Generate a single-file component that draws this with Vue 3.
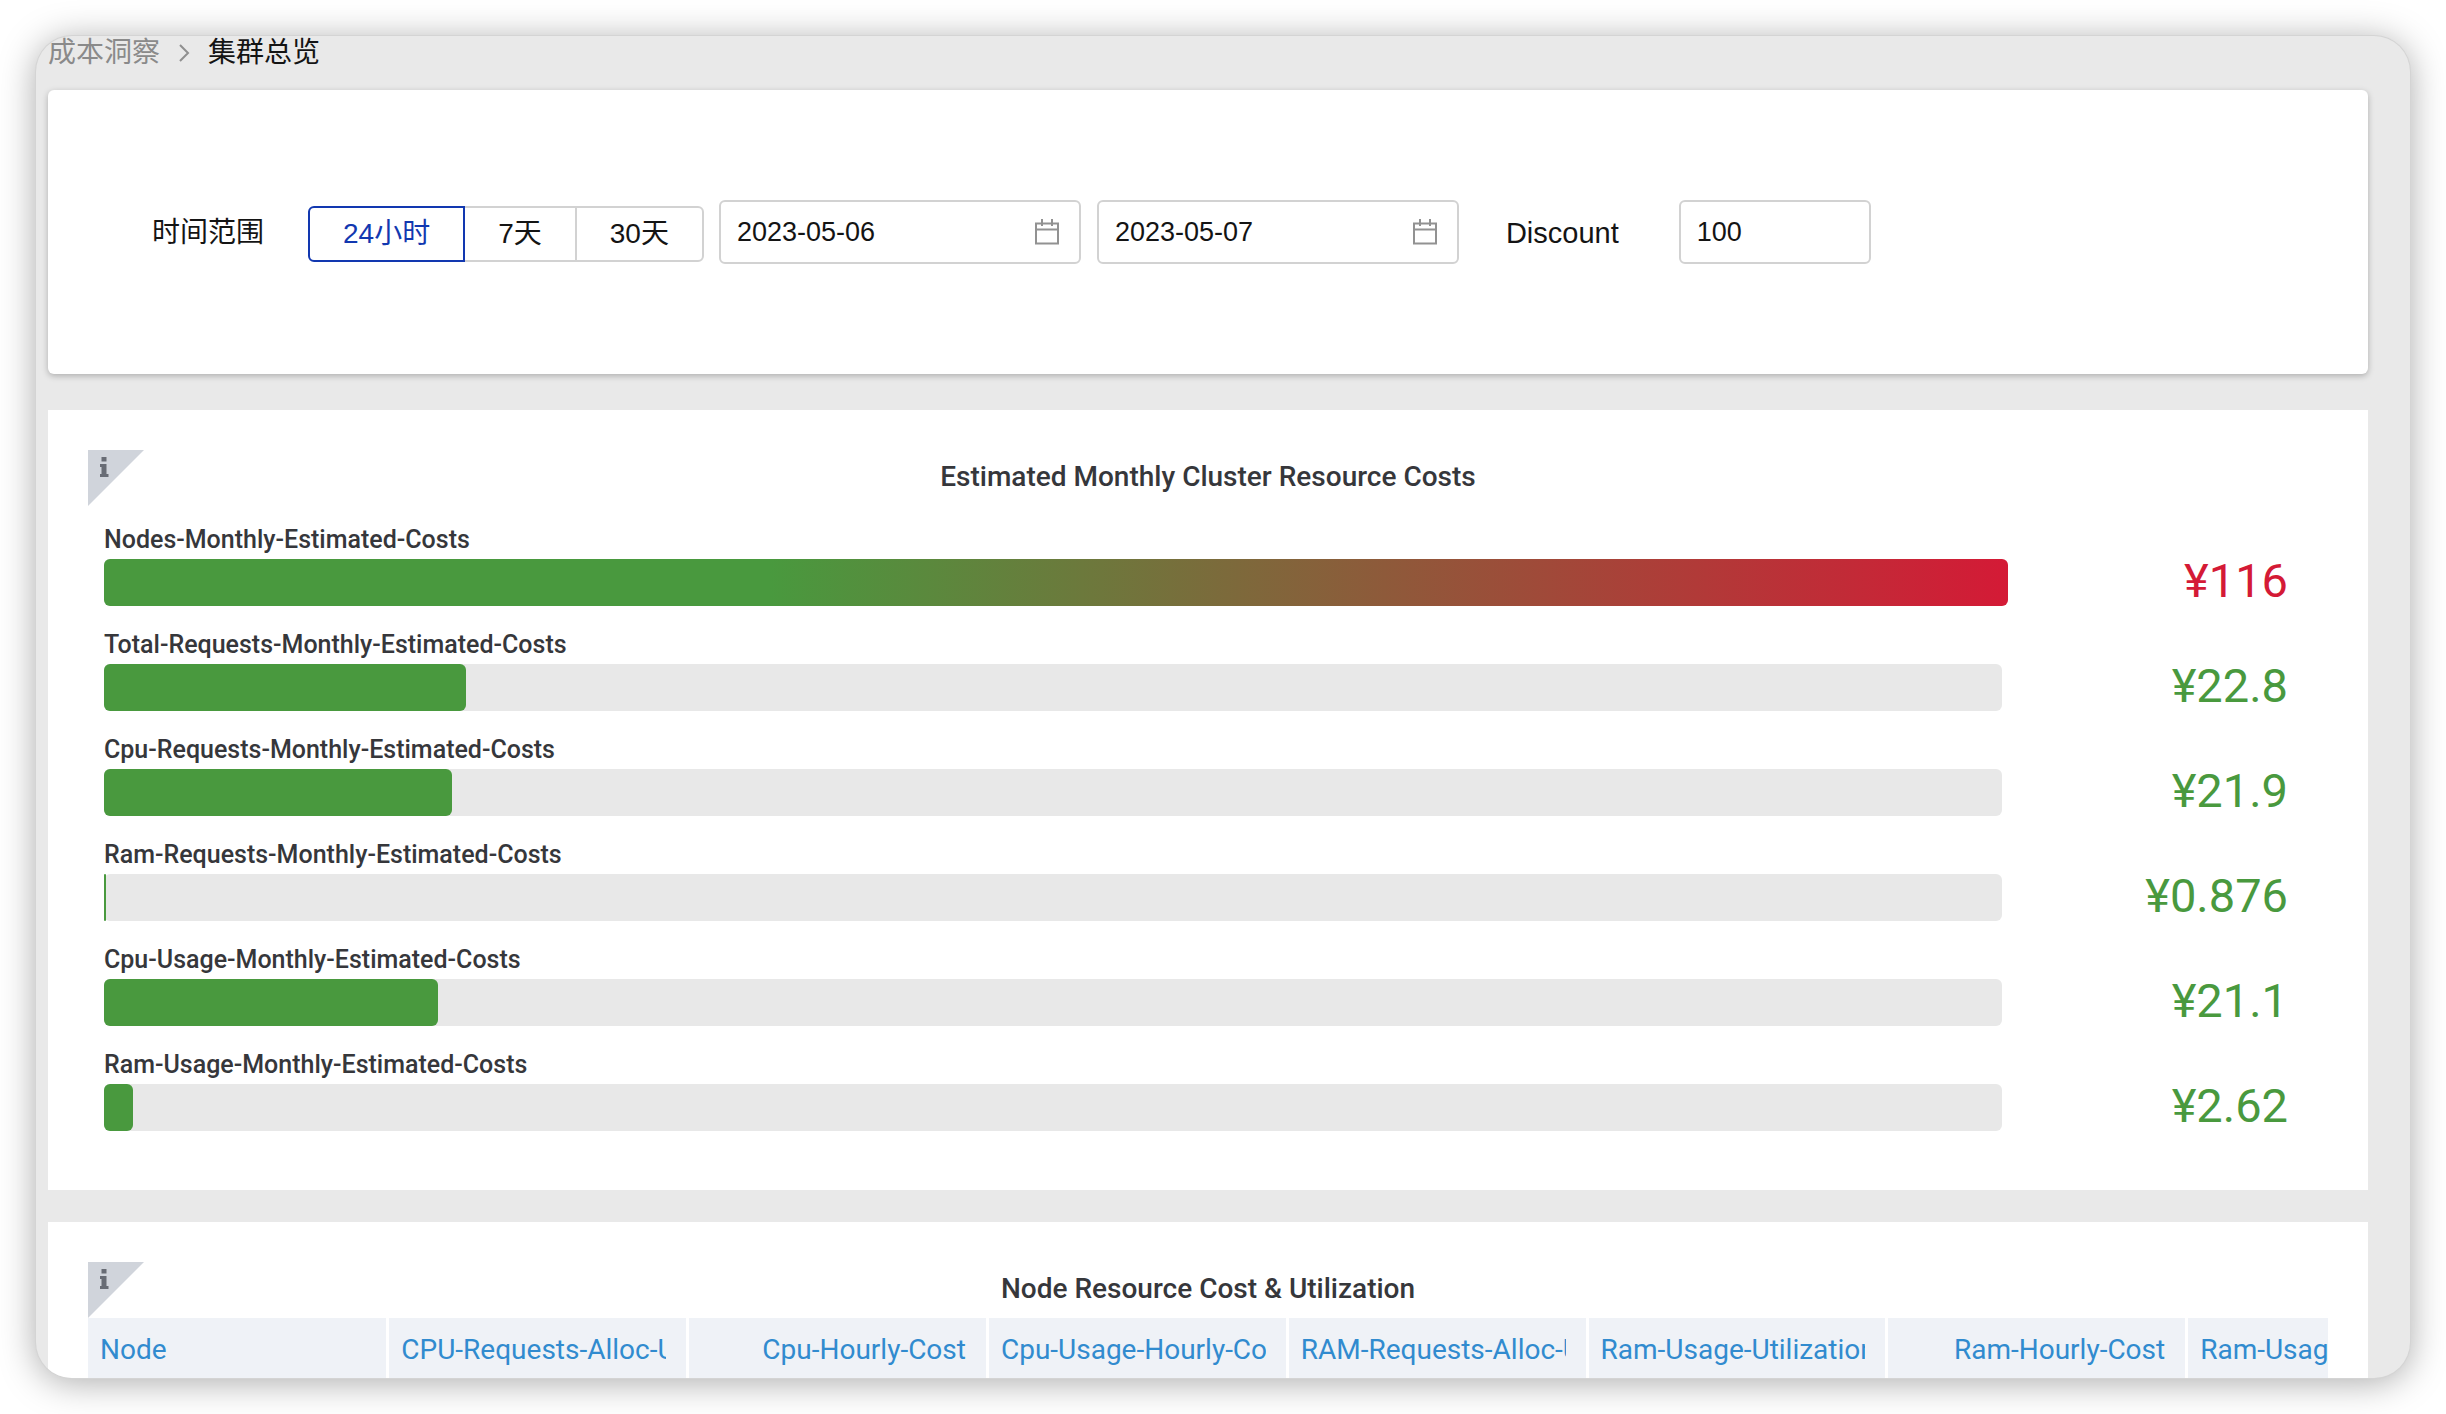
<script setup>
import { ref } from 'vue'

const ranges = ['24小时', '7天', '30天']
const activeRange = ref('24小时')
const startDate = ref('2023-05-06')
const endDate = ref('2023-05-07')
const discount = ref('100')

const costs = [
  { label: 'Nodes-Monthly-Estimated-Costs', value: '¥116', percent: 100.3, high: true },
  { label: 'Total-Requests-Monthly-Estimated-Costs', value: '¥22.8', percent: 19.05 },
  { label: 'Cpu-Requests-Monthly-Estimated-Costs', value: '¥21.9', percent: 18.32 },
  { label: 'Ram-Requests-Monthly-Estimated-Costs', value: '¥0.876', percent: 0.1 },
  { label: 'Cpu-Usage-Monthly-Estimated-Costs', value: '¥21.1', percent: 17.58 },
  { label: 'Ram-Usage-Monthly-Estimated-Costs', value: '¥2.62', percent: 1.53 },
]

const columns = [
  { name: 'Node' },
  { name: 'CPU-Requests-Alloc-Utilization' },
  { name: 'Cpu-Hourly-Cost', right: true },
  { name: 'Cpu-Usage-Hourly-Cost' },
  { name: 'RAM-Requests-Alloc-Utilization' },
  { name: 'Ram-Usage-Utilization' },
  { name: 'Ram-Hourly-Cost', right: true },
  { name: 'Ram-Usage-Hourly-Cost' },
]
</script>

<template>
  <div class="window">
    <nav class="breadcrumb" aria-label="breadcrumb">
      <a href="#" class="crumb">成本洞察</a>
      <svg class="chevron" viewBox="0 0 12 18" aria-hidden="true">
        <path d="M2 1l8 8-8 8" fill="none" stroke="#8f8f8f" stroke-width="2" />
      </svg>
      <span class="crumb current">集群总览</span>
    </nav>

    <form class="filters" @submit.prevent>
      <span id="range-label" class="label">时间范围</span>
      <div class="range" role="group" aria-labelledby="range-label">
        <button
          v-for="r in ranges"
          :key="r"
          type="button"
          :class="{ active: r === activeRange }"
          @click="activeRange = r"
        >{{ r }}</button>
      </div>
      <label class="field date">
        <input v-model="startDate" type="text" aria-label="开始日期" />
        <svg viewBox="0 0 24 26" aria-hidden="true">
          <path d="M1 4.5h22v20H1zM1 10.5h22M7 0v7M17 0v7" />
        </svg>
      </label>
      <label class="field date">
        <input v-model="endDate" type="text" aria-label="结束日期" />
        <svg viewBox="0 0 24 26" aria-hidden="true">
          <path d="M1 4.5h22v20H1zM1 10.5h22M7 0v7M17 0v7" />
        </svg>
      </label>
      <label class="label discount-label" for="discount">Discount</label>
      <div class="field discount">
        <input id="discount" v-model="discount" type="text" />
      </div>
    </form>

    <section class="panel costs">
      <svg class="corner" viewBox="0 0 56 56" aria-hidden="true">
        <path d="M0 0h56L0 56z" fill="#d0d4db" />
        <path d="M13.5 7h5v4.5h-5zM12 14h6.500v10H20.500v3H12v-3h1.500v-7H12z" fill="#686c75" />
      </svg>
      <h2>Estimated Monthly Cluster Resource Costs</h2>
      <ul class="gauges">
        <li v-for="c in costs" :key="c.label">
          <span class="name">{{ c.label }}</span>
          <div class="row">
            <div class="track">
              <div class="fill" :class="{ high: c.high }" :style="{ width: c.percent + '%' }"></div>
            </div>
            <span class="value" :class="{ high: c.high }">{{ c.value }}</span>
          </div>
        </li>
      </ul>
    </section>

    <section class="panel nodes">
      <svg class="corner" viewBox="0 0 56 56" aria-hidden="true">
        <path d="M0 0h56L0 56z" fill="#d0d4db" />
        <path d="M13.5 7h5v4.5h-5zM12 14h6.500v10H20.500v3H12v-3h1.500v-7H12z" fill="#686c75" />
      </svg>
      <h2>Node Resource Cost &amp; Utilization</h2>
      <div class="table-wrap">
        <table>
          <thead>
            <tr>
              <th v-for="c in columns" :key="c.name" scope="col" :class="{ right: c.right }">
                <div>{{ c.name }}</div>
              </th>
            </tr>
          </thead>
        </table>
      </div>
    </section>
  </div>
</template>

<style>
body {
  margin: 0;
  background: #fff;
  overflow: hidden;
}
</style>

<style scoped>
.window {
  box-sizing: border-box;
  height: calc(100vh - 72px);
  margin: 36px;
  padding: 0 42px 0 12px;
  overflow: hidden;
  background: #e9e9e9;
  border-radius: 36px;
  box-shadow: 0 0 0 1px #d4d4d4, 0 4px 36px rgba(0, 0, 0, 0.34);
  font-family: "Liberation Sans", "Noto Sans CJK SC", sans-serif;
  color: #141414;
}

.breadcrumb {
  display: flex;
  align-items: center;
  height: 34px;
  padding-bottom: 20px;
  font-size: 28px;
}

.crumb {
  color: #8a8a8a;
  text-decoration: none;
  line-height: 34px;
}

.crumb.current {
  color: #141414;
}

.chevron {
  width: 12px;
  height: 18px;
  margin: 0 18px;
}

.filters {
  display: flex;
  align-items: center;
  padding: 110px 104px;
  background: #fff;
  border-radius: 6px;
  box-shadow: 0 2px 6px rgba(0, 0, 0, 0.25);
  font-size: 28px;
}

.label {
  padding-top: 2px;
  line-height: 40px;
}

.range {
  display: flex;
  margin: 4px 15px 0 44px;
}

.range button {
  box-sizing: border-box;
  height: 56px;
  margin: 0 0 0 -2px;
  padding: 0 33px;
  background: #fff;
  border: 2px solid #d2d2d2;
  color: #141414;
  font: inherit;
  line-height: 52px;
}

.range button:first-child {
  margin-left: 0;
  border-radius: 6px 0 0 6px;
}

.range button:last-child {
  border-radius: 0 6px 6px 0;
}

.range button.active {
  position: relative;
  border-color: #1238b0;
  color: #1238b0;
}

.field {
  box-sizing: border-box;
  display: flex;
  align-items: center;
  height: 64px;
  padding: 0 20px 0 16px;
  border: 2px solid #d2d2d2;
  border-radius: 6px;
}

.field input {
  flex: 1;
  min-width: 0;
  padding: 0;
  border: 0;
  outline: 0;
  background: none;
  color: #141414;
  font: inherit;
  font-size: 27px;
}

.date {
  width: 362px;
  margin-right: 16px;
}

.date svg {
  width: 24px;
  height: 26px;
  fill: none;
  stroke: #929292;
  stroke-width: 2;
}

.discount-label {
  margin: 0 60px 0 31px;
  font-size: 29px;
}

.discount {
  width: 192px;
}

.panel {
  position: relative;
  padding: 40px;
  background: #fff;
  color: #36373b;
  font-family: Roboto, sans-serif;
}

.costs {
  margin-top: 36px;
  padding-bottom: 39px;
}

.nodes {
  margin-top: 32px;
}

.corner {
  position: absolute;
  top: 40px;
  left: 40px;
  width: 56px;
  height: 56px;
}

h2 {
  margin: 0;
  padding-bottom: 2px;
  text-align: center;
  font-size: 28px;
  font-weight: 500;
  line-height: 54px;
}

.gauges {
  margin: 0;
  padding: 15px 40px 0 16px;
  list-style: none;
}

.gauges li {
  padding-bottom: 20px;
}

.name {
  display: block;
  font-size: 25px;
  font-weight: 500;
  line-height: 38px;
}

.row {
  display: flex;
}

.track {
  flex: 1;
  height: 47px;
  background: #e8e8e8;
  border-radius: 6px;
}

.fill {
  height: 100%;
  border-radius: 6px;
  background: #49993e;
}

.fill.high {
  background: linear-gradient(90deg, #49993e 35%, #d41a36);
}

.value {
  width: 286px;
  text-align: right;
  font-size: 47px;
  line-height: 44px;
  color: #49993e;
}

.value.high {
  color: #d41a36;
}

.table-wrap {
  overflow: hidden;
}

table {
  width: 2400px;
  table-layout: fixed;
  border-collapse: collapse;
}

th {
  box-sizing: border-box;
  height: 80px;
  padding: 0 20px 16px 12px;
  background: #eff2f7;
  border-right: 3px solid #fff;
  text-align: left;
  color: #318bcf;
  font-size: 28px;
  font-weight: 400;
  line-height: 64px;
}

th div {
  overflow: hidden;
  white-space: nowrap;
}

th.right {
  text-align: right;
}
</style>
